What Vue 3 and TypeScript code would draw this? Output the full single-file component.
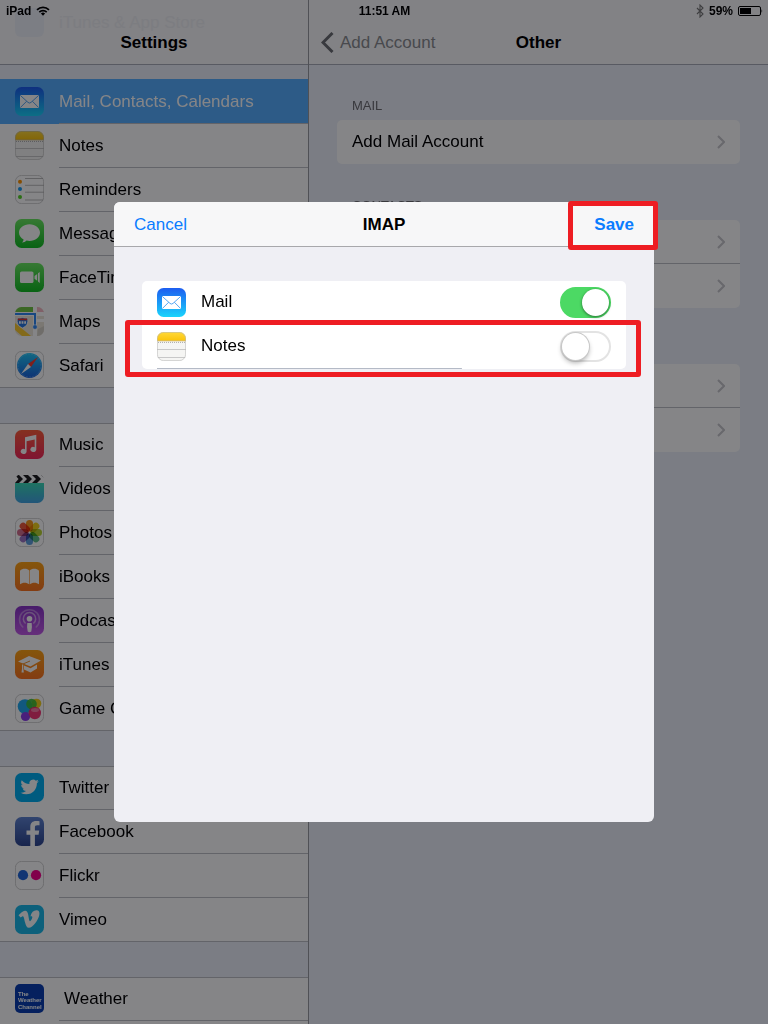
<script setup lang="ts">
import { ref } from 'vue'

interface Item {
  id: string
  label: string
  selected?: boolean
  indented?: boolean
}

const groups: Item[][] = [
  [
    { id: 'mail', label: 'Mail, Contacts, Calendars', selected: true },
    { id: 'notes', label: 'Notes' },
    { id: 'reminders', label: 'Reminders' },
    { id: 'messages', label: 'Messages' },
    { id: 'facetime', label: 'FaceTime' },
    { id: 'maps', label: 'Maps' },
    { id: 'safari', label: 'Safari' },
  ],
  [
    { id: 'music', label: 'Music' },
    { id: 'videos', label: 'Videos' },
    { id: 'photos', label: 'Photos' },
    { id: 'ibooks', label: 'iBooks' },
    { id: 'podcasts', label: 'Podcasts' },
    { id: 'itunesu', label: 'iTunes U' },
    { id: 'gamecenter', label: 'Game Center' },
  ],
  [
    { id: 'twitter', label: 'Twitter' },
    { id: 'facebook', label: 'Facebook' },
    { id: 'flickr', label: 'Flickr' },
    { id: 'vimeo', label: 'Vimeo' },
  ],
  [{ id: 'weather', label: 'Weather', indented: true }],
]

const sections = [
  { title: 'Mail', rows: [{ label: 'Add Mail Account', hint: 'Add Mail Account' }] },
  {
    title: 'Contacts',
    rows: [
      { label: '', hint: 'Add LDAP Account' },
      { label: '', hint: 'Add CardDAV Account' },
    ],
  },
  {
    title: '',
    rows: [
      { label: '', hint: 'Add CalDAV Account' },
      { label: '', hint: 'Add Subscribed Calendar' },
    ],
  },
]

const mailOn = ref(true)
const notesOn = ref(false)
const petals = [
  { angle: 0, color: '#f79a1c' },
  { angle: 45, color: '#f2d21b' },
  { angle: 90, color: '#b9d432' },
  { angle: 135, color: '#5fc08a' },
  { angle: 180, color: '#5f9fdc' },
  { angle: 225, color: '#9b76c4' },
  { angle: 270, color: '#d4708f' },
  { angle: 315, color: '#ee5b3c' },
]
</script>

<template>
  <svg class="sprite" aria-hidden="true">
    <defs>
      <linearGradient id="g-mail" x1="0" y1="0" x2="0" y2="1"><stop offset="0" stop-color="#1d5df0" /><stop offset="1" stop-color="#19d4fc" /></linearGradient>
      <linearGradient id="g-notes" x1="0" y1="0" x2="0" y2="1"><stop offset="0" stop-color="#ffd93a" /><stop offset="1" stop-color="#fbc40c" /></linearGradient>
      <linearGradient id="g-green" x1="0" y1="0" x2="0" y2="1"><stop offset="0" stop-color="#6ae860" /><stop offset="1" stop-color="#12bd22" /></linearGradient>
      <linearGradient id="g-music" x1="0" y1="0" x2="0" y2="1"><stop offset="0" stop-color="#ff5e3a" /><stop offset="1" stop-color="#f4295a" /></linearGradient>
      <linearGradient id="g-video" x1="0" y1="0" x2="0" y2="1"><stop offset="0" stop-color="#3cdcb8" /><stop offset="1" stop-color="#42a4e4" /></linearGradient>
      <linearGradient id="g-books" x1="0" y1="0" x2="0" y2="1"><stop offset="0" stop-color="#ffa514" /><stop offset="1" stop-color="#fb7420" /></linearGradient>
      <linearGradient id="g-pod" x1="0" y1="0" x2="0" y2="1"><stop offset="0" stop-color="#8a35c8" /><stop offset="1" stop-color="#c35be8" /></linearGradient>
      <linearGradient id="g-fb" x1="0" y1="0" x2="0" y2="1"><stop offset="0" stop-color="#5e83d0" /><stop offset="1" stop-color="#2e4790" /></linearGradient>
      <linearGradient id="g-safari" x1="0" y1="0" x2="0" y2="1"><stop offset="0" stop-color="#21c8f8" /><stop offset="1" stop-color="#1b62dc" /></linearGradient>
      <clipPath id="tile"><rect width="29" height="29" rx="6.5" /></clipPath>
    </defs>

    <symbol id="i-mail" viewBox="0 0 29 29">
      <rect width="29" height="29" rx="6.5" fill="url(#g-mail)" />
      <rect x="5" y="8" width="19" height="13" rx=".6" fill="#fff" />
      <path d="M5.3 8.4 13 15.4q1.5 1.3 3 0L23.7 8.4M5.3 20.6l6.3-6.3M23.7 20.6l-6.3-6.3" fill="none" stroke="#2a8ff0" stroke-width=".8" />
    </symbol>
    <symbol id="i-notes" viewBox="0 0 29 29">
      <g clip-path="url(#tile)">
        <rect width="29" height="29" fill="#f5f5f3" />
        <rect width="29" height="8.6" fill="url(#g-notes)" />
        <path d="M0 8.8h29" stroke="#c99e1b" stroke-width=".6" />
        <path d="M1 10.4h28" stroke="#aaa" stroke-width="1" stroke-dasharray="1 1" />
        <path d="M0 17.5h29M0 25.5h29" stroke="#bcbcbc" stroke-width=".8" />
      </g>
      <rect x=".4" y=".4" width="28.2" height="28.2" rx="6.2" fill="none" stroke="#bbb" stroke-width=".6" />
    </symbol>
    <symbol id="i-reminders" viewBox="0 0 29 29">
      <rect x=".4" y=".4" width="28.2" height="28.2" rx="6.2" fill="#fff" stroke="#c4c4c4" stroke-width=".8" />
      <path d="M10 3.5h18M10 10.3h19M10 17.2h19M10 25h18" stroke="#aaa" stroke-width=".8" />
      <circle cx="5" cy="6.8" r="2" fill="#ff9500" /><circle cx="5" cy="14" r="2" fill="#1a9cf0" /><circle cx="5" cy="22" r="2" fill="#53d326" />
    </symbol>
    <symbol id="i-messages" viewBox="0 0 29 29">
      <rect width="29" height="29" rx="6.5" fill="url(#g-green)" />
      <path d="M14.5 5.2C8.6 5.2 4 8.9 4 13.6c0 3 1.8 5.500 4.600 7-.2 1.300-.8 2.200-1.700 3 2 0 3.600-.8 4.700-2 .9.200 1.900.3 2.900.3 5.900 0 10.500-3.700 10.500-8.300S20.400 5.200 14.500 5.200z" fill="#fff" />
    </symbol>
    <symbol id="i-facetime" viewBox="0 0 29 29">
      <rect width="29" height="29" rx="6.5" fill="url(#g-green)" />
      <rect x="5" y="8.500" width="13.500" height="11.500" rx="1.600" fill="#fff" />
      <path d="M19.500 13l2.700-2v6.800l-2.700-2zM23 10.300l1.700-1.300v11L23 18.600z" fill="#fff" />
    </symbol>
    <symbol id="i-maps" viewBox="0 0 29 29">
      <g clip-path="url(#tile)">
        <rect width="29" height="29" fill="#ece6d8" />
        <path d="M0 0h18v5H0z" fill="#72c544" /><path d="M22 0h7v5h-7z" fill="#f5b9c4" />
        <path d="M18 0h4v29h-4zM0 5h29v4H0zM20 12h9v3h-9z" fill="#fff" />
        <path d="M0 16 16 29H7L0 23z" fill="#fccb2e" />
        <path d="M0 7h20v11" fill="none" stroke="#2f88f3" stroke-width="2" />
        <path d="M23 22l6-3v10h-7z" fill="#d5d1c7" />
        <circle cx="20" cy="20" r="2.300" fill="#2f88f3" stroke="#fff" stroke-width=".6" />
        <path d="M2.500 11q2 .8 5-.5 3 1.300 5 .5 1.800 7.500-5 10-6.800-2.500-5-10z" fill="#2878e0" stroke="#fff" stroke-width=".7" />
        <path d="M2.800 11.400h9.400v1.800H2.800z" fill="#e2372f" />
        <path d="M4 15.500h7" stroke="#fff" stroke-width="2.600" stroke-dasharray="1.800 .8" />
      </g>
    </symbol>
    <symbol id="i-safari" viewBox="0 0 29 29">
      <rect x=".4" y=".4" width="28.200" height="28.200" rx="6.200" fill="#fff" stroke="#c4c4c4" stroke-width=".8" />
      <circle cx="14.500" cy="14.500" r="12.500" fill="url(#g-safari)" />
      <circle cx="14.500" cy="14.500" r="11.500" fill="none" stroke="#bfe6ff" stroke-width=".9" stroke-dasharray=".3 1.200" />
      <path d="M23 6 13 13l3 3z" fill="#f43b30" /><path d="M6 23 13 13l3 3z" fill="#fff" />
    </symbol>
    <symbol id="i-music" viewBox="0 0 29 29">
      <rect width="29" height="29" rx="6.500" fill="url(#g-music)" />
      <path d="M10 7.300 21.300 4.800V19.500a3 2.500 0 1 1-1.600-2.200V9.500L11.600 11.300V21.500a3 2.500 0 1 1-1.600-2.200z" fill="#fff" />
    </symbol>
    <symbol id="i-videos" viewBox="0 0 29 29">
      <g clip-path="url(#tile)">
        <rect width="29" height="29" fill="#fff" />
        <path d="M0 1h4l4 4-4 4H0l3.500-4zM8 1h5l4 4-4 4H8l4-4zM17 1h5l4 4-4 4h-5l4-4zM26 1h3v3z" fill="#1e1e20" />
        <rect y="9" width="29" height="20" fill="url(#g-video)" />
      </g>
    </symbol>
    <symbol id="i-photos" viewBox="0 0 29 29">
      <rect x=".4" y=".4" width="28.200" height="28.200" rx="6.200" fill="#fff" stroke="#c4c4c4" stroke-width=".8" />
      <rect v-for="p in petals" :key="p.angle" class="petal" x="11" y="2" width="7" height="11.500" rx="3.500" :fill="p.color" :transform="`rotate(${p.angle} 14.5 14.5)`" />
    </symbol>
    <symbol id="i-ibooks" viewBox="0 0 29 29">
      <rect width="29" height="29" rx="6.500" fill="url(#g-books)" />
      <path d="M14.200 8.600C12.500 6.500 7.500 6 5 8.800V22.300c2.500-2.200 7-2 9.200 0zM14.800 8.600C16.500 6.500 21.500 6 24 8.800V22.300c-2.500-2.200-7-2-9.200 0z" fill="#fff" />
    </symbol>
    <symbol id="i-podcasts" viewBox="0 0 29 29">
      <rect width="29" height="29" rx="6.500" fill="url(#g-pod)" />
      <g fill="none" stroke="#fff" stroke-width="1.500">
        <path d="M8.300 21.500a10 10 0 1 1 12.400 0" opacity=".35" /><path d="M10.600 17.500a6.200 6.200 0 1 1 7.800 0" opacity=".5" />
      </g>
      <circle cx="14.500" cy="12.800" r="2.800" fill="#fff" />
      <path d="M12.300 17h4.400q.7 4.500-.4 8.500-1.800 1.500-3.600 0-1.100-4-.4-8.500z" fill="#fff" />
    </symbol>
    <symbol id="i-itunesu" viewBox="0 0 29 29">
      <rect width="29" height="29" rx="6.500" fill="url(#g-books)" />
      <path d="M3 11.500 14 6l12 4.500-10.500 6z" fill="#fff" />
      <path d="M9 15.500l6.500 2.700 6.500-3.700v4l-6.500 4-6.500-3z" fill="#fff" />
      <path d="M15 11 7.500 14.200v5" fill="none" stroke="#f08a18" stroke-width=".9" /><path d="M7 14.500h1.300v4l.5 4H6.500l.5-4z" fill="#fff" />
    </symbol>
    <symbol id="i-gamecenter" viewBox="0 0 29 29">
      <rect x=".4" y=".4" width="28.200" height="28.200" rx="6.200" fill="#fff" stroke="#c4c4c4" stroke-width=".8" />
      <circle cx="21.500" cy="9.500" r="4.800" fill="#f4d01c" /><circle cx="10" cy="12.500" r="7.300" fill="#22a9ee" />
      <circle cx="16.500" cy="10" r="5.300" fill="#3dbb35" fill-opacity=".9" /><circle cx="10.500" cy="22.500" r="4.600" fill="#8c3de8" />
      <circle cx="19.800" cy="19" r="6.200" fill="#f5296c" fill-opacity=".93" /><ellipse cx="20" cy="16" rx="4" ry="2" fill="#fff" opacity=".35" />
    </symbol>
    <symbol id="i-twitter" viewBox="0 0 29 29">
      <rect width="29" height="29" rx="6.500" fill="#00aeef" />
      <path transform="translate(5.500 4.800) scale(.76)" d="M23.950 4.570a10 10 0 0 1-2.820.77 4.960 4.960 0 0 0 2.160-2.720c-.95.55-2 .95-3.130 1.180a4.920 4.920 0 0 0-8.380 4.480C7.690 8.100 4.070 6.130 1.640 3.160a4.920 4.920 0 0 0 1.520 6.570 4.900 4.900 0 0 1-2.230-.61v.06a4.920 4.920 0 0 0 3.950 4.830 5 5 0 0 1-2.210.08 4.940 4.940 0 0 0 4.600 3.420A9.870 9.870 0 0 1 0 19.540a14 14 0 0 0 7.550 2.210c9.050 0 14-7.500 14-13.980 0-.21 0-.42-.02-.63a9.940 9.940 0 0 0 2.460-2.550z" fill="#fff" />
    </symbol>
    <symbol id="i-facebook" viewBox="0 0 29 29">
      <rect width="29" height="29" rx="6.500" fill="url(#g-fb)" />
      <path d="M15.300 29V17.800h-3.800v-4.300h3.800v-3.600c0-3.800 2.300-5.900 5.700-5.900 1.500 0 2.700.1 3.500.2v4h-2.200c-2 0-2.400.9-2.400 2.300v3h4.300l-.6 4.300h-3.700V29z" fill="#fff" />
    </symbol>
    <symbol id="i-flickr" viewBox="0 0 29 29">
      <rect x=".4" y=".4" width="28.200" height="28.200" rx="6.200" fill="#fff" stroke="#c4c4c4" stroke-width=".8" />
      <circle cx="8" cy="14.200" r="5.100" fill="#1f67d8" /><circle cx="21" cy="14.200" r="5.100" fill="#f7008c" />
    </symbol>
    <symbol id="i-vimeo" viewBox="0 0 29 29">
      <rect width="29" height="29" rx="6.500" fill="#19b9e8" />
      <path d="M3.500 10.200C5.500 8.400 8 6 9.800 5.800c2.200-.2 3 1.500 3.500 4.300.5 3 .9 6.200 1.700 6.200.7 0 2.200-2.500 2.300-3.700.1-1.400-.8-1.600-1.900-1.200 1-4.200 3.200-6.200 6.200-6.100 2.300.1 3.300 1.600 2.700 4.700-.9 4.900-6.500 12.800-10.400 12.800-2.200 0-3-2-3.900-5.500-.7-2.700-1.100-6-2.100-6-.5 0-1.500.7-2.200 1.200z" fill="#fff" />
    </symbol>
  </svg>

  <div class="screen">
    <aside class="sidebar">
      <header class="bar">
        <div class="ghost" aria-hidden="true"><span class="ghost-icon"></span>iTunes &amp; App Store</div>
        <h1>Settings</h1>
      </header>
      <nav class="list">
        <ul v-for="(group, g) in groups" :key="g" class="group">
          <li v-for="item in group" :key="item.id">
            <a href="#" class="item" :class="{ selected: item.selected }">
              <svg v-if="item.id === 'weather'" class="icon" viewBox="0 0 29 29" aria-hidden="true">
                <rect width="29" height="29" rx="5" fill="#0a3fb0" />
                <text class="channel" x="3" y="12">The</text>
                <text class="channel" x="3" y="18">Weather</text>
                <text class="channel" x="3" y="25">Channel</text>
              </svg>
              <svg v-else class="icon" aria-hidden="true"><use :href="`#i-${item.id}`" /></svg>
              <span class="label" :class="{ indented: item.indented }">{{ item.label }}</span>
            </a>
          </li>
        </ul>
        <div class="rest"></div>
      </nav>
    </aside>

    <main class="detail">
      <header class="bar">
        <button type="button" class="back">
          <svg viewBox="0 0 13 21" aria-hidden="true"><path d="M11.500 1 2 10.500l9.500 9.500" fill="none" stroke="currentColor" stroke-width="3" /></svg>
          Add Account
        </button>
        <h2>Other</h2>
      </header>
      <section v-for="(section, s) in sections" :key="s" class="section">
        <h3>{{ section.title }}</h3>
        <div class="card">
          <button v-for="row in section.rows" :key="row.hint" type="button" class="row" :aria-label="row.hint">
            <span>{{ row.label }}</span>
            <svg class="chevron" viewBox="0 0 8 14" aria-hidden="true"><path d="M1 1l6 6-6 6" fill="none" stroke="currentColor" stroke-width="2" /></svg>
          </button>
        </div>
      </section>
    </main>

    <div class="status">
      <span class="carrier">iPad
        <svg class="wifi" viewBox="0 0 14 10" aria-hidden="true"><g fill="none" stroke="#000" stroke-width="1.700"><path d="M1 3.800a8.500 8.500 0 0 1 12 0M3.300 6.100a5.300 5.300 0 0 1 7.400 0" /></g><path d="M4.900 7.500a3 3 0 0 1 4.200 0L7 9.800z" /></svg>
      </span>
      <span class="clock">11:51 AM</span>
      <span class="power">
        <svg class="bluetooth" viewBox="0 0 8 14" aria-hidden="true"><path d="M1 4l6 6-3 3V1l3 3-6 6" fill="none" stroke="#777" stroke-width="1.100" /></svg>
        59%
        <svg class="battery" viewBox="0 0 25 10" aria-hidden="true"><rect x=".5" y=".5" width="22" height="9" rx="1.500" fill="none" stroke="#000" /><rect x="2" y="2" width="11" height="6" /><path d="M23.500 3q1.500 2 0 4z" /></svg>
      </span>
    </div>

    <div class="scrim">
      <div class="dialog" role="dialog" aria-modal="true" aria-labelledby="dialog-title">
        <header class="dialog-bar">
          <button type="button" class="cancel">Cancel</button>
          <h2 id="dialog-title">IMAP</h2>
          <button type="button" class="save">Save</button>
          <span class="mark mark-save"></span>
        </header>
        <div class="services">
          <label class="service">
            <svg class="icon" aria-hidden="true"><use href="#i-mail" /></svg>
            <span class="label">Mail</span>
            <input v-model="mailOn" type="checkbox" class="switch" />
          </label>
          <label class="service last">
            <svg class="icon" aria-hidden="true"><use href="#i-notes" /></svg>
            <span class="label">Notes</span>
            <input v-model="notesOn" type="checkbox" class="switch" />
            <span class="mark mark-row"></span>
          </label>
        </div>
      </div>
    </div>
  </div>
</template>

<style>
body {
  margin: 0;
}
</style>

<style scoped>
.sprite {
  position: absolute;
  width: 0;
  height: 0;
}
.petal {
  mix-blend-mode: multiply;
}
.channel {
  font: bold 6px "Liberation Sans", sans-serif;
  fill: #fff;
}
.screen {
  position: relative;
  display: flex;
  height: 100vh;
  overflow: hidden;
  background: #ebeff9;
  color: #000;
  font: 17px/20px "Liberation Sans", Arial, sans-serif;
}
h1,
h2,
h3,
ul {
  margin: 0;
  padding: 0;
  list-style: none;
}
h1,
h2 {
  font-size: 17px;
  line-height: 20px;
  font-weight: bold;
}
button {
  border: 0;
  padding: 0;
  background: none;
  color: inherit;
  font: inherit;
  cursor: pointer;
}
.sidebar {
  display: flex;
  flex-direction: column;
  flex: 0 0 308px;
  border-right: 1px solid #9a9ca2;
}
.bar {
  position: relative;
  display: flex;
  flex: none;
  align-items: flex-end;
  justify-content: center;
  height: 64px;
  border-bottom: 1px solid #a9adb8;
  background: #f9f9fb;
}
.bar h1,
.bar h2 {
  padding-bottom: 11px;
}
.ghost {
  position: absolute;
  top: 8px;
  left: 15px;
  display: flex;
  align-items: center;
  gap: 15px;
  color: #eeeff3;
}
.ghost-icon {
  width: 29px;
  height: 29px;
  border-radius: 6px;
  background: #eef2fa;
}
.list {
  display: flex;
  flex: 1;
  flex-direction: column;
  gap: 35px;
  min-height: 0;
  padding-top: 15px;
}
.group {
  flex: none;
  background: #fff;
  box-shadow: inset 0 1px #bfc0c5, inset 0 -1px #bfc0c5;
}
.group:last-of-type {
  box-shadow: inset 0 1px #bfc0c5;
}
.rest {
  flex: 1;
  margin-top: -35px;
  background: #fff;
}
.item {
  display: flex;
  align-items: flex-start;
  gap: 15px;
  height: 44px;
  padding-left: 15px;
  color: inherit;
  text-decoration: none;
}
.icon {
  flex: none;
  width: 29px;
  height: 29px;
  margin-top: 7px;
}
.item .label {
  display: flex;
  flex: 1;
  align-items: center;
  align-self: stretch;
  padding-top: 1px;
  border-bottom: 1px solid #bfc0c5;
}
.group:not(:last-of-type) li:last-child .label {
  border-color: transparent;
}
.item .indented {
  padding-left: 5px;
}
.item.selected {
  margin-top: -1px;
  padding-top: 1px;
  background: #56aeff;
  color: #fff;
}
.detail {
  flex: 1;
  min-width: 0;
}
.back {
  position: absolute;
  left: 12px;
  bottom: 11px;
  display: flex;
  align-items: center;
  gap: 6px;
  color: #8b8d91;
}
.back svg {
  width: 13px;
  height: 21px;
  color: #6c6e73;
}
.section {
  padding: 0 28px;
}
.section h3 {
  display: flex;
  align-items: flex-end;
  height: 56px;
  padding: 0 15px 6px;
  box-sizing: border-box;
  color: #6d6d72;
  font-size: 13px;
  line-height: 16px;
  font-weight: normal;
  text-transform: uppercase;
}
.bar + .section h3 {
  height: 55px;
}
.card,
.services {
  border-radius: 5px;
  background: #fff;
}
.row {
  display: flex;
  align-items: center;
  justify-content: space-between;
  width: 100%;
  height: 44px;
  padding: 0 15px;
  text-align: left;
}
.row + .row {
  box-shadow: 0 -1px #bfc0c5;
}
.chevron {
  width: 8px;
  height: 14px;
  color: #c7c7cc;
}
.status {
  position: absolute;
  inset: 0 0 auto;
  display: grid;
  grid-template-columns: 1fr auto 1fr;
  align-items: center;
  height: 22px;
  padding: 0 5px 0 6px;
  font-size: 12px;
  line-height: 22px;
  font-weight: bold;
}
.carrier,
.power {
  display: flex;
  align-items: center;
  gap: 5px;
}
.power {
  justify-content: flex-end;
}
.wifi {
  width: 14px;
  height: 10px;
}
.bluetooth {
  width: 8px;
  height: 14px;
}
.battery {
  width: 25px;
  height: 10px;
}
.scrim {
  position: absolute;
  inset: 0;
  display: flex;
  align-items: center;
  justify-content: center;
  background: rgba(0, 0, 4, 0.48);
}
.dialog {
  width: 540px;
  max-width: 100%;
  min-height: 620px;
  border-radius: 6px;
  background: #efeff4;
}
.dialog-bar {
  position: relative;
  display: grid;
  grid-template-columns: 1fr auto 1fr;
  align-items: center;
  height: 42px;
  padding: 2px 20px 0;
  border-bottom: 1px solid #a8a8ab;
  border-radius: 6px 6px 0 0;
  background: #f7f7f8;
}
.cancel,
.save {
  color: #0a7cff;
}
.cancel {
  justify-self: start;
}
.save {
  justify-self: end;
  font-weight: bold;
}
.services {
  margin: 34px 28px 0;
}
.service {
  position: relative;
  display: flex;
  align-items: flex-start;
  height: 44px;
  padding: 0 15px;
}
.service .label {
  flex: 1;
  padding: 11px 0 0 15px;
}
.last {
  background: linear-gradient(#b4bac6, #b4bac6) 15px 43px / 63% 1px no-repeat;
}
.switch {
  display: flex;
  width: 51px;
  height: 31px;
  margin: 6px 0 0;
  padding: 0;
  box-sizing: border-box;
  border: 2px solid #e3e3e3;
  border-radius: 16px;
  background: #fff;
  appearance: none;
}
.switch::before {
  width: 27px;
  height: 27px;
  border-radius: 50%;
  background: #fff;
  box-shadow: 0 0 0 1px #c8c8c8, 0 3px 5px rgba(0, 0, 0, 0.3);
  content: "";
}
.switch:checked {
  justify-content: flex-end;
  border-color: #4cd964;
  background: #4cd964;
}
.switch:checked::before {
  box-shadow: 0 1px 3px rgba(0, 0, 0, 0.5);
}
.mark {
  position: absolute;
  border: 5px solid #ee1d23;
  border-radius: 3px;
  pointer-events: none;
}
.mark-save {
  inset: -1px -4px -4px auto;
  width: 80px;
}
.mark-row {
  inset: -5px -15px -8px -17px;
}
</style>
